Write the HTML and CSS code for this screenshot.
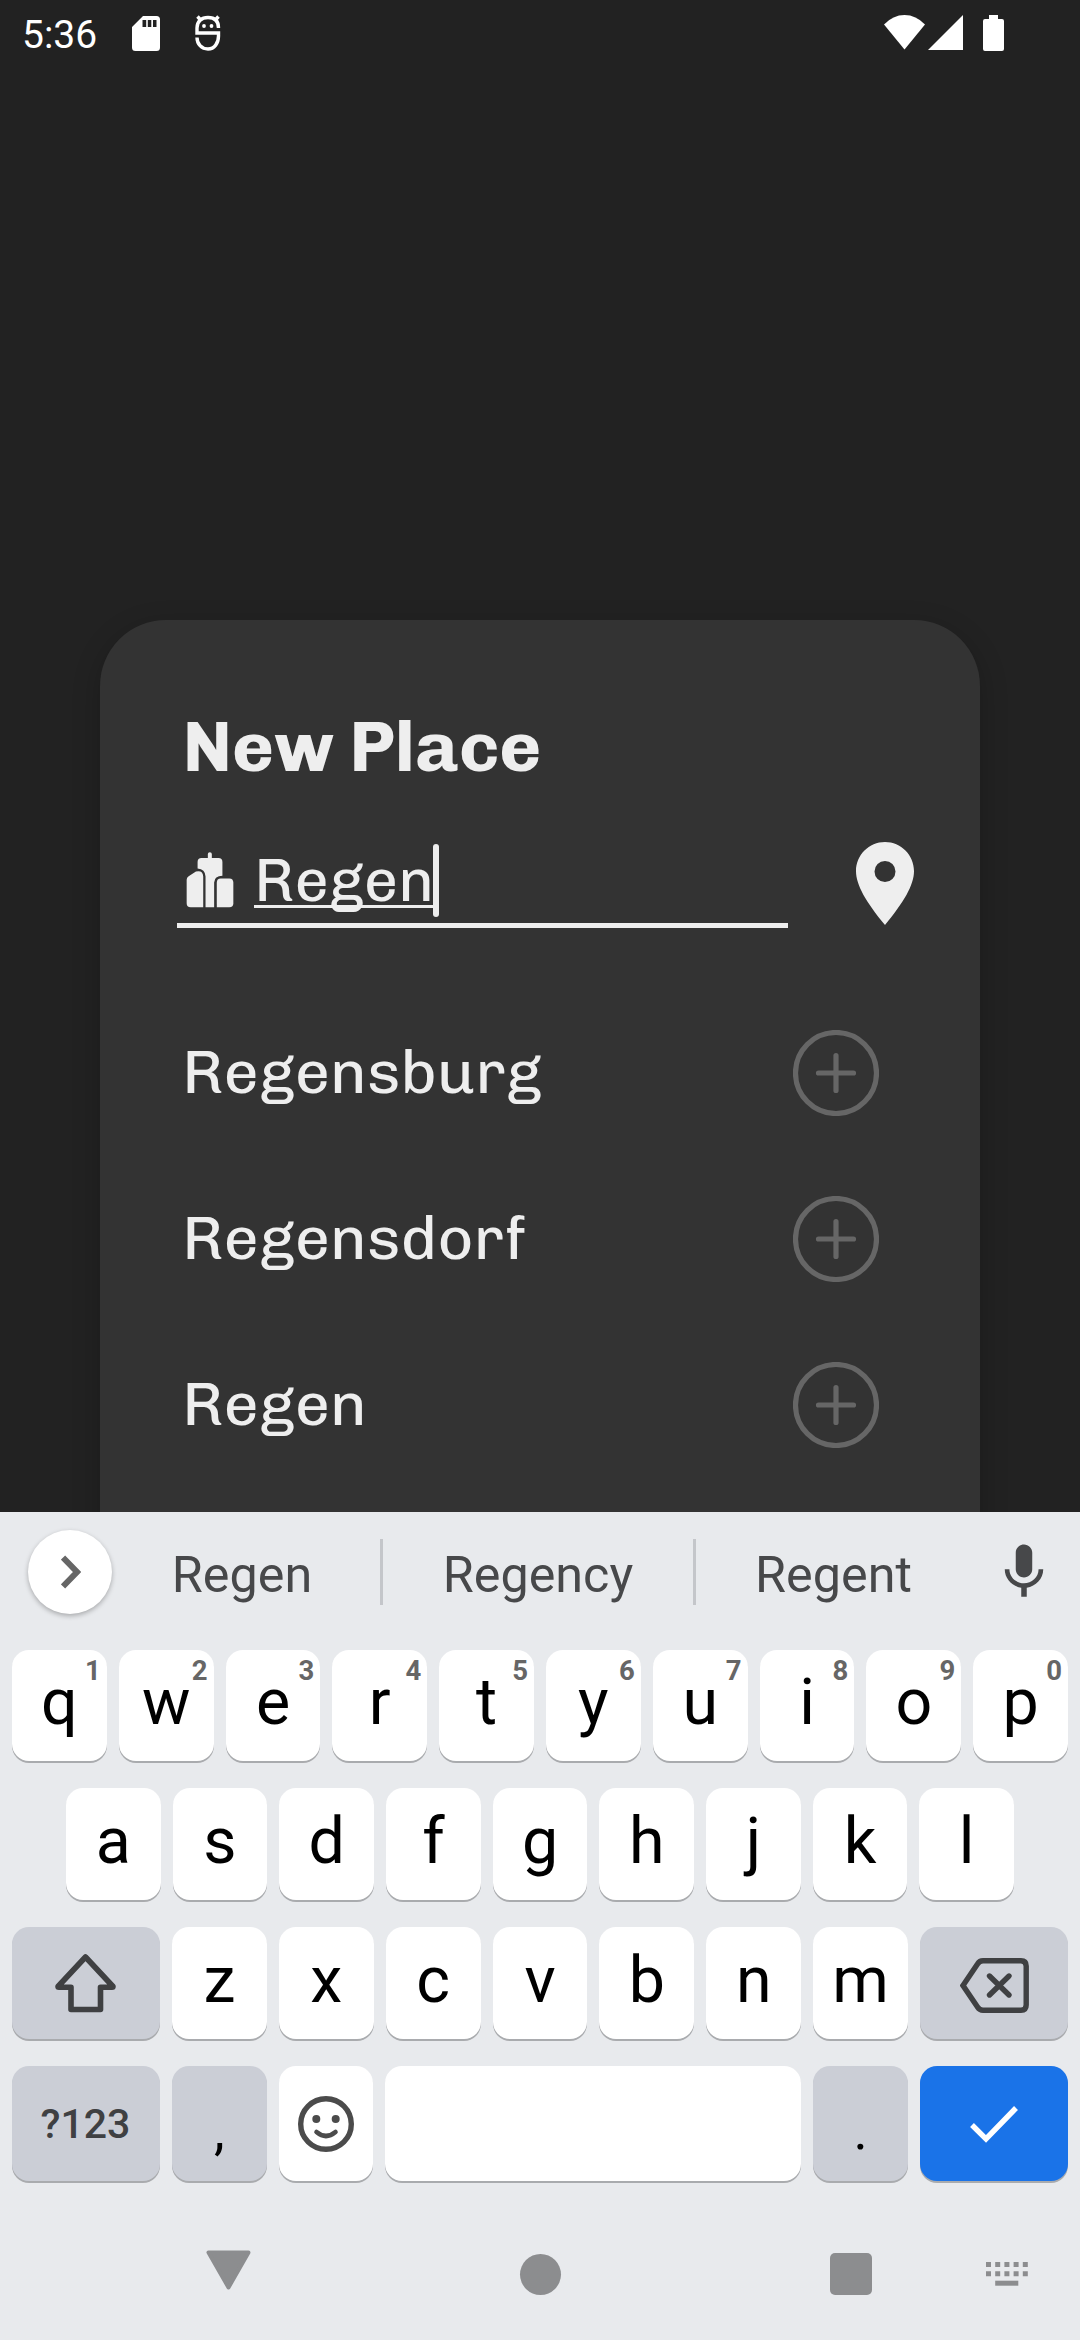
FILE: index.html
```html
<!DOCTYPE html>
<html lang="en">
<head>
<meta charset="utf-8">
<title>New Place</title>
<link rel="stylesheet" href="styles.css">
</head>
<body>
<div class="screen">
  <header class="status">
    <span class="clock">5:36</span>
    <svg class="sd" width="28" height="35" viewBox="0 0 28 35"><path fill="#fff" fill-rule="evenodd" d="M11 0H24.500q3.500 0 3.500 3.500V31.500q0 3.500-3.500 3.500H3.500Q0 35 0 31.500V11ZM10.500 4V11h3.700V4ZM15.800 4V11h3.500V4ZM21 4V11h3.500V4Z"/></svg>
    <svg class="debug" width="26" height="36" viewBox="0 0 26 36"><g fill="none" stroke="#fff" stroke-width="3.400"><path d="M23.500 13C23.500 6 19.500 2.500 13 2.500S2 6.500 2 13v5H23.500v3C23.500 28 19.500 34 13 34 6.500 34 2 29 2 22.500"/><path d="M2.500 1.500l4 4.500M23.500 1.500l-4 4.500"/></g><circle cx="9" cy="11" r="1.900" fill="#fff"/><circle cx="16.500" cy="11" r="1.900" fill="#fff"/></svg>
    <svg class="wifi" width="41" height="35" viewBox="0 0 41 35"><path fill="#fff" d="M0 9.500Q9 0 20.500 0T41 9.500L20.500 34.500Z"/></svg>
    <svg class="signal" width="35" height="35" viewBox="0 0 35 35"><path fill="#fff" d="M35 0V35H0Z"/></svg>
    <svg class="battery" width="21" height="36" viewBox="0 0 21 36"><path fill="#fff" d="M6 0h9v4h4q2 0 2 2v28q0 2-2 2H2q-2 0-2-2V6q0-2 2-2h4Z"/></svg>
  </header>

  <main class="stage">
    <section class="card">
      <h1 class="title">New Place</h1>
      <div class="search">
        <div class="field">
          <svg class="city" width="48" height="56" viewBox="318 756 145 169"><g fill="#eee"><path d="M320 840Q320 832 326 829L348 815Q369 810 370 830V923H332Q320 923 320 911Z"/><path d="M384 774V762Q384 757 390 757T396 762V774H416Q428 774 428 786V828Q404 828 403 848V923H377V830Q376 808 353 806V786Q353 774 365 774Z"/><path d="M411 923V849Q411 836 423 836H449Q461 836 461 849V911Q461 923 449 923Z"/></g></svg>
          <span class="query">Regen</span><span class="caret"></span>
        </div>
        <svg class="pin" width="58" height="83" viewBox="0 0 58 83"><path fill="#eee" fill-rule="evenodd" d="M29 0C45 0 58 13 58 29C58 43 48 60 29 83C10 60 0 43 0 29C0 13 13 0 29 0ZM29 19a10.500 10.500 0 1 0 0 21a10.500 10.500 0 1 0 0-21Z"/></svg>
      </div>
      <ul class="results">
        <li class="result"><span class="place">Regensburg</span><svg width="86" height="86" viewBox="0 0 86 86"><circle cx="43" cy="43" r="40.500"/><path d="M43 25.500V60.500M25.500 43H60.500"/></svg></li>
        <li class="result"><span class="place">Regensdorf</span><svg width="86" height="86" viewBox="0 0 86 86"><circle cx="43" cy="43" r="40.500"/><path d="M43 25.500V60.500M25.500 43H60.500"/></svg></li>
        <li class="result"><span class="place">Regen</span><svg width="86" height="86" viewBox="0 0 86 86"><circle cx="43" cy="43" r="40.500"/><path d="M43 25.500V60.500M25.500 43H60.500"/></svg></li>
      </ul>
    </section>
  </main>

  <section class="keyboard">
    <div class="suggestions">
      <span class="expand"><svg width="20" height="34" viewBox="0 0 20 34"><path fill="none" stroke="#666" stroke-width="6" d="M2 2.500L16 17L2 31.500"/></svg></span>
      <span class="word first">Regen</span><i class="divider"></i>
      <span class="word">Regency</span><i class="divider"></i>
      <span class="word">Regent</span>
      <svg class="mic" width="66" height="66" viewBox="0 0 24 24"><path fill="#47484a" d="M12 14c1.660 0 2.990-1.340 2.990-3L15 5c0-1.660-1.340-3-3-3S9 3.340 9 5v6c0 1.660 1.340 3 3 3zm5.300-3c0 3-2.540 5.100-5.300 5.100S6.700 14 6.700 11H5c0 3.410 2.720 6.230 6 6.720V21h2v-3.280c3.280-.480 6-3.300 6-6.720h-1.700z"/></svg>
    </div>
    <div class="row top">
      <span class="key">q<sup>1</sup></span><span class="key">w<sup>2</sup></span><span class="key">e<sup>3</sup></span><span class="key">r<sup>4</sup></span><span class="key">t<sup>5</sup></span><span class="key">y<sup>6</sup></span><span class="key">u<sup>7</sup></span><span class="key">i<sup>8</sup></span><span class="key">o<sup>9</sup></span><span class="key">p<sup>0</sup></span>
    </div>
    <div class="row home">
      <span class="key">a</span><span class="key">s</span><span class="key">d</span><span class="key">f</span><span class="key">g</span><span class="key">h</span><span class="key">j</span><span class="key">k</span><span class="key">l</span>
    </div>
    <div class="row">
      <span class="key wide dim icon"><svg width="62" height="60" viewBox="0 0 62 60"><path fill="none" stroke="#3f4042" stroke-width="5.600" stroke-linejoin="round" d="M30.500 4L58 33.500Q58 34.200 57 34.200H45.500V56.500H16V34.200H4Q3 34.200 3 33.500Z"/></svg></span>
      <span class="key">z</span><span class="key">x</span><span class="key">c</span><span class="key">v</span><span class="key">b</span><span class="key">n</span><span class="key">m</span>
      <span class="key wide dim icon back"><svg width="69" height="55" viewBox="0 0 69 55"><g fill="none" stroke="#3f4042" stroke-width="5.400" stroke-linecap="round"><path d="M3 27.500L17.500 6Q19.500 2.800 23 2.800H61Q66.200 2.800 66.200 8V47Q66.200 52.200 61 52.200H23Q19.500 52.200 17.500 49Z"/><path d="M29.500 18L49 37M49 18L29.500 37"/></g></svg></span>
    </div>
    <div class="row last">
      <span class="key wide dim mode">?123</span>
      <span class="key dim punct">,</span>
      <span class="key icon"><svg width="56" height="56" viewBox="0 0 56 56"><g fill="none" stroke="#4b4b4b" stroke-width="5.400"><circle cx="28" cy="28" r="25.300"/><path stroke-linecap="round" stroke-width="4.600" d="M18.500 36Q28 44 37.500 36"/></g><circle cx="18.300" cy="23" r="4" fill="#4b4b4b"/><circle cx="37.700" cy="23" r="4" fill="#4b4b4b"/></svg></span>
      <span class="key space"></span>
      <span class="key dim punct">.</span>
      <span class="key wide enter icon"><svg width="50" height="38" viewBox="0 0 50 38"><path fill="none" stroke="#fff" stroke-width="5.400" d="M3 20L17 34L47 3"/></svg></span>
    </div>
    <nav class="nav">
      <svg class="nav-back" width="45" height="40" viewBox="0 0 45 40"><path fill="#8c8d8f" stroke="#8c8d8f" stroke-width="4" stroke-linejoin="round" d="M2.500 2.500H42.500L22.500 37.500Z"/></svg>
      <i class="nav-home"></i>
      <i class="nav-recents"></i>
      <svg class="nav-ime" width="42" height="24" viewBox="0 0 42 24"><g fill="none" stroke="#8c8d8f" stroke-width="5"><path stroke-dasharray="5 4.200" d="M0 2.500H42M0 11.800H42"/><path d="M9.200 21.200H32.300"/></g></svg>
    </nav>
  </section>
</div>
</body>
</html>
```
FILE: styles.css
```css
* { box-sizing: border-box; }

body {
  margin: 0;
  background: #222;
  font-family: Roboto, "Liberation Sans", sans-serif;
}

svg { display: block; flex: none; }

.screen {
  width: 1080px;
  height: 2340px;
  display: flex;
  flex-direction: column;
  overflow: hidden;
  background: #222;
}

/* Status bar */
.status {
  height: 66px;
  flex: none;
  display: flex;
  align-items: center;
  padding-left: 22px;
  color: #fff;
}
.clock { width: 110px; font-size: 39px; line-height: 66px; padding-top: 3px; }
.debug { margin-left: 35px; }
.wifi { margin-left: 663px; margin-bottom: 2px; }
.signal { margin-left: 3px; margin-bottom: 1px; }
.battery { margin-left: 20px; }

/* Dialog */
.stage {
  height: 1446px;
  flex: none;
  padding: 554px 100px 0;
  overflow: hidden;
}
.card {
  height: 960px;
  padding: 82px 64px 0 77px;
  border-radius: 66px;
  background: #333;
  box-shadow: 0 8px 28px rgba(0, 0, 0, 0.22);
  color: #eee;
  font-family: Chivo, "Liberation Sans", Arial, sans-serif;
}
.title {
  margin: 0 0 50px 5.5px;
  font-size: 71.5px;
  line-height: 89px;
  padding-bottom: 1px;
  font-weight: 700;
}
.search { display: flex; justify-content: space-between; padding-right: 2px; }
.field {
  width: 611px;
  height: 86px;
  display: flex;
  align-items: center;
  padding: 0 0 4px 9px;
  border-bottom: 5px solid #eee;
}
.city { margin-bottom: 2px; }
.query {
  width: 179px;
  margin-left: 20px;
  font-size: 60.4px;
  line-height: 77px;
  white-space: nowrap;
  text-decoration: underline;
  text-decoration-thickness: 3px;
  text-underline-offset: 4px;
  text-decoration-skip-ink: none;
}
.caret { width: 6px; height: 73px; border-radius: 3px; background: #eee; }
.results { list-style: none; margin: 62px 0 0; padding: 0 37px 0 5px; }
.result {
  height: 166px;
  display: flex;
  align-items: center;
  justify-content: space-between;
}
.place { padding-bottom: 3px; font-size: 62px; }
.result svg { fill: none; stroke: #666; stroke-width: 5.2px; stroke-linecap: round; }

/* Keyboard */
.keyboard { flex: 1; background: #e8eaed; }
.suggestions {
  height: 120px;
  margin-bottom: 18px;
  display: grid;
  grid-template-columns: 112px 268px 3px 310px 3px 275px 109px;
  align-items: center;
}
.expand {
  width: 84px;
  height: 84px;
  margin-left: 28px;
  padding-left: 2px;
  display: flex;
  align-items: center;
  justify-content: center;
  border-radius: 50%;
  background: #fff;
  box-shadow: 0 2px 5px rgba(0, 0, 0, 0.28);
}
.word { padding-top: 5px; text-align: center; font-size: 50.3px; color: #47484a; }
.first { padding-right: 8px; }
.divider { height: 66px; background: #c4c6ca; }
.mic { margin-left: 20px; }

.row { height: 112px; margin-bottom: 27px; padding: 0 12px; display: flex; gap: 12px; }
.row.top { height: 111px; }
.row.home { padding: 0 66px; }
.row.last { height: 115px; margin-bottom: 0; }
.key {
  position: relative;
  flex: 1 1 0;
  display: flex;
  align-items: center;
  justify-content: center;
  padding-bottom: 7px;
  border-radius: 17px;
  background: #fff;
  box-shadow: 0 2px 0 #a9abae;
  color: #000;
  font-size: 64.5px;
  line-height: 76px;
}
.key sup {
  position: absolute;
  top: 5px;
  right: 6px;
  font-size: 27.5px;
  line-height: 32px;
  font-weight: 700;
  color: #666;
}
.wide { flex: 0 0 148px; }
.dim { background: #cbced6; }
.icon { padding: 0; }
.back { padding-top: 5px; }
.mode { padding: 0 1px 0 0; font-size: 41px; font-weight: 500; color: #3f4042; }
.punct { padding: 14px 0 0; font-size: 54px; }
.space { flex: 0 0 416px; }
.enter { background: #1a73e8; }

/* System navigation */
.nav { height: 159px; display: flex; align-items: center; padding: 27px 0 0 206px; }
.nav-back { margin-top: -8px; }
.nav-home { width: 41px; height: 41px; margin-left: 269px; border-radius: 50%; background: #8c8d8f; }
.nav-recents { width: 42px; height: 42px; margin-left: 269px; border-radius: 5px; background: #8c8d8f; }
.nav-ime { margin-left: 114px; }
```
